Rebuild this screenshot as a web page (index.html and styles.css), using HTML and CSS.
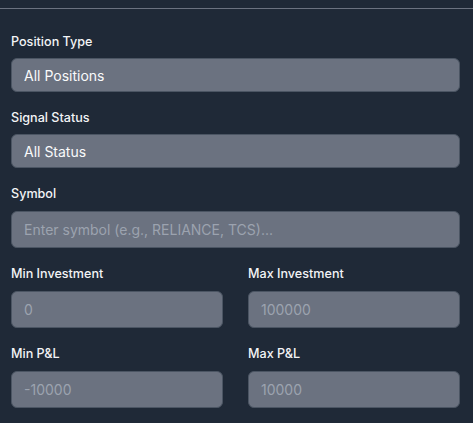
FILE: index.html
```html
<!DOCTYPE html>
<html lang="en">
<head>
<meta charset="utf-8">
<title>Filters</title>
<link rel="stylesheet" href="styles.css">
</head>
<body>
<div class="page">
  <form class="panel">
    <div class="field">
      <label class="label" for="ptype">Position Type</label>
      <select id="ptype" class="control select">
        <option>All Positions</option>
      </select>
    </div>
    <div class="field">
      <label class="label" for="sstatus">Signal Status</label>
      <select id="sstatus" class="control select">
        <option>All Status</option>
      </select>
    </div>
    <div class="field">
      <label class="label label-input" for="symbol">Symbol</label>
      <input id="symbol" class="control input" type="text" placeholder="Enter symbol (e.g., RELIANCE, TCS)...">
    </div>
    <div class="row">
      <div class="field">
        <label class="label label-input" for="minInv">Min Investment</label>
        <input id="minInv" class="control input" type="text" placeholder="0">
      </div>
      <div class="field">
        <label class="label label-input" for="maxInv">Max Investment</label>
        <input id="maxInv" class="control input" type="text" placeholder="100000">
      </div>
    </div>
    <div class="row">
      <div class="field">
        <label class="label label-input" for="minPl">Min P&amp;L</label>
        <input id="minPl" class="control input" type="text" placeholder="-10000">
      </div>
      <div class="field">
        <label class="label label-input" for="maxPl">Max P&amp;L</label>
        <input id="maxPl" class="control input" type="text" placeholder="10000">
      </div>
    </div>
  </form>
</div>
</body>
</html>
```
FILE: styles.css
```css
* {
  box-sizing: border-box;
}

html, body {
  margin: 0;
  padding: 0;
  background: #1f2937;
  font-family: Inter, "Noto Sans", "Liberation Sans", sans-serif;
}

.page {
  padding-top: 8px;
  min-height: 423px;
}

.panel {
  margin: 0;
  border-top: 1px solid #6b7280;
  padding: 24px 13px 0 11px;
  display: flex;
  flex-direction: column;
  gap: 17px;
}

.field {
  display: flex;
  flex-direction: column;
  min-width: 0;
}

.row {
  display: grid;
  grid-template-columns: 1fr 1fr;
  column-gap: 25px;
}

.label {
  display: block;
  font-size: 12.6px;
  line-height: 18px;
  font-weight: 500;
  color: #f3f4f6;
  margin-bottom: 7px;
}

.label-input {
  margin-bottom: 8px;
}

.control {
  display: block;
  width: 100%;
  margin: 0;
  background: #6b7280;
  border: 1px solid #4b5563;
  border-radius: 6px;
  color: #f9fafb;
  font-family: inherit;
  font-size: 14px;
  padding: 0 12px;
  outline: none;
}

.select {
  -webkit-appearance: none;
  appearance: none;
  height: 34px;
}

.input {
  height: 37px;
}

.input::placeholder {
  color: #9ca3af;
  opacity: 1;
}
```
